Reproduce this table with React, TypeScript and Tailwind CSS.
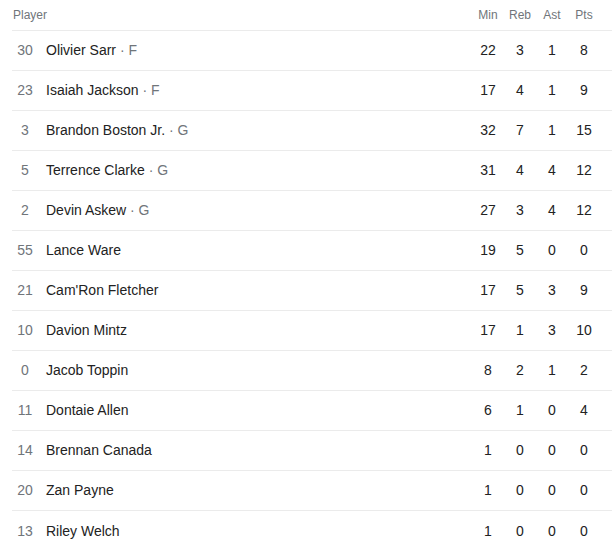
const players = [
  { no: 30, name: "Olivier Sarr", pos: "F", min: 22, reb: 3, ast: 1, pts: 8 },
  { no: 23, name: "Isaiah Jackson", pos: "F", min: 17, reb: 4, ast: 1, pts: 9 },
  { no: 3, name: "Brandon Boston Jr.", pos: "G", min: 32, reb: 7, ast: 1, pts: 15 },
  { no: 5, name: "Terrence Clarke", pos: "G", min: 31, reb: 4, ast: 4, pts: 12 },
  { no: 2, name: "Devin Askew", pos: "G", min: 27, reb: 3, ast: 4, pts: 12 },
  { no: 55, name: "Lance Ware", min: 19, reb: 5, ast: 0, pts: 0 },
  { no: 21, name: "Cam'Ron Fletcher", min: 17, reb: 5, ast: 3, pts: 9 },
  { no: 10, name: "Davion Mintz", min: 17, reb: 1, ast: 3, pts: 10 },
  { no: 0, name: "Jacob Toppin", min: 8, reb: 2, ast: 1, pts: 2 },
  { no: 11, name: "Dontaie Allen", min: 6, reb: 1, ast: 0, pts: 4 },
  { no: 14, name: "Brennan Canada", min: 1, reb: 0, ast: 0, pts: 0 },
  { no: 20, name: "Zan Payne", min: 1, reb: 0, ast: 0, pts: 0 },
  { no: 13, name: "Riley Welch", min: 1, reb: 0, ast: 0, pts: 0 },
];

type Player = (typeof players)[number] & { pos?: string };

function Row({ p, last }: { p: Player; last: boolean }) {
  return (
    <div
      className={`flex items-center h-10 text-[14px] text-[#222] ${
        last ? "" : "border-b border-[#ebebeb]"
      }`}
    >
      <div className="w-[26px] text-center text-[#70757a]">{p.no}</div>
      <div className="flex-1 pl-2">
        {p.name}
        {p.pos && <span className="text-[#70757a]"> · {p.pos}</span>}
      </div>
      <div className="w-8 text-center">{p.min}</div>
      <div className="w-8 text-center">{p.reb}</div>
      <div className="w-8 text-center">{p.ast}</div>
      <div className="w-8 text-center mr-3">{p.pts}</div>
    </div>
  );
}

export default function App() {
  return (
    <div
      className="w-[612px] h-[555px] bg-white pl-3 overflow-hidden"
      style={{ fontFamily: '"Liberation Sans", Arial, sans-serif' }}
    >
      <div className="flex items-center h-[31px] border-b border-[#ebebeb] text-[12px] text-[#70757a]">
        <div className="flex-1 pl-px">Player</div>
        <div className="w-8 text-center">Min</div>
        <div className="w-8 text-center">Reb</div>
        <div className="w-8 text-center">Ast</div>
        <div className="w-8 text-center mr-3">Pts</div>
      </div>
      {players.map((p, i) => (
        <Row key={p.no} p={p} last={i === players.length - 1} />
      ))}
    </div>
  );
}
